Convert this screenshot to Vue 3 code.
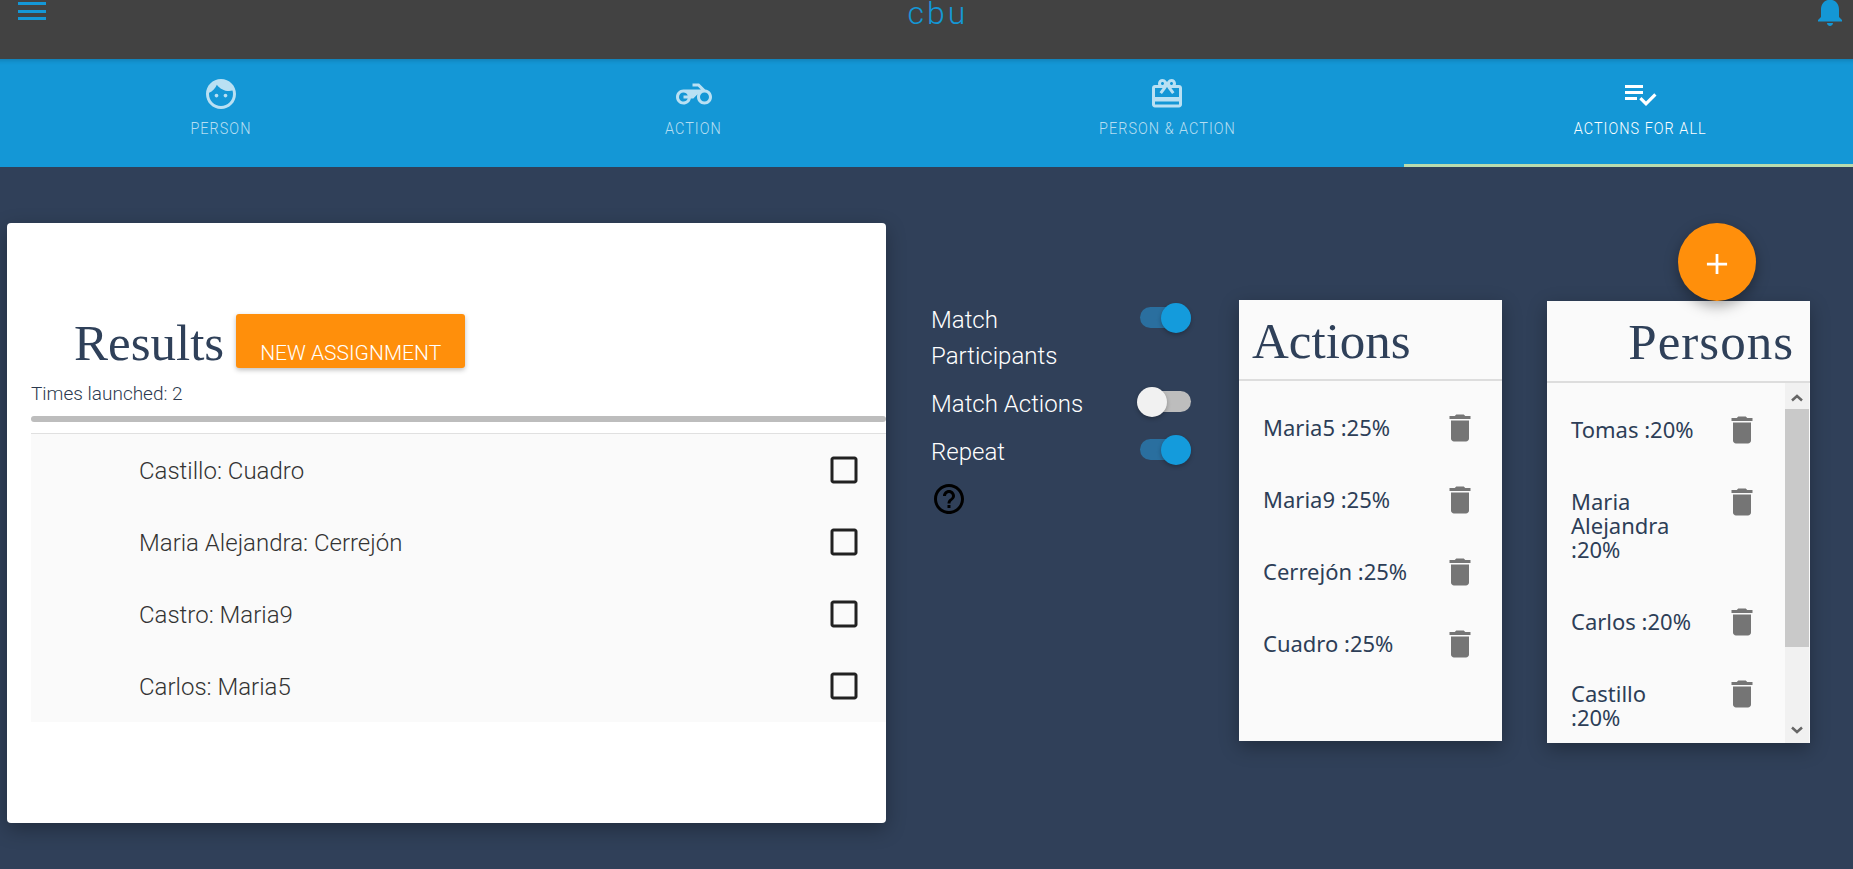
<script setup>
const tabs = [
  { label: 'PERSON', icon: 'M9 11.75c-.69 0-1.25.56-1.25 1.25s.56 1.25 1.25 1.25 1.25-.56 1.25-1.25-.56-1.25-1.25-1.25zm6 0c-.69 0-1.25.56-1.25 1.25s.56 1.25 1.25 1.25 1.25-.56 1.25-1.25-.56-1.25-1.25-1.25zM12 2C6.48 2 2 6.48 2 12s4.48 10 10 10 10-4.48 10-10S17.52 2 12 2zm0 18c-4.41 0-8-3.59-8-8 0-.29.02-.58.05-.86 2.36-1.05 4.23-2.98 5.21-5.37C11.07 8.33 14.05 10 17.42 10c.78 0 1.53-.09 2.25-.26.21.71.33 1.47.33 2.26 0 4.41-3.59 8-8 8z' },
  { label: 'ACTION', icon: 'M19.44 9.03L15.41 5H11v2h3.59l2 2H5c-2.8 0-5 2.2-5 5s2.2 5 5 5c2.46 0 4.45-1.69 4.9-4h1.65l2.77-2.77c-.21.54-.32 1.14-.32 1.77 0 2.8 2.2 5 5 5s5-2.2 5-5c0-2.65-1.97-4.77-4.56-4.97zM7.82 15C7.4 16.15 6.3 17 5 17c-1.63 0-3-1.37-3-3s1.37-3 3-3c1.3 0 2.4.85 2.82 2H5v2h2.82zM19 17c-1.66 0-3-1.34-3-3s1.34-3 3-3 3 1.34 3 3-1.34 3-3 3z' },
  { label: 'PERSON & ACTION', icon: 'M20 6h-2.18c.11-.31.18-.65.18-1 0-1.66-1.34-3-3-3-1.05 0-1.96.54-2.5 1.35l-.5.67-.5-.68C10.96 2.54 10.05 2 9 2 7.34 2 6 3.34 6 5c0 .35.07.69.18 1H4c-1.11 0-1.99.89-1.99 2L2 19c0 1.11.89 2 2 2h16c1.11 0 2-.89 2-2V8c0-1.11-.89-2-2-2zm-5-2c.55 0 1 .45 1 1s-.45 1-1 1-1-.45-1-1 .45-1 1-1zM9 4c.55 0 1 .45 1 1s-.45 1-1 1-1-.45-1-1 .45-1 1-1zm11 15H4v-2h16v2zm0-5H4V8h5.08L7 10.83 8.62 12 11 8.76l1-1.36 1 1.36L15.38 12 17 10.83 14.92 8H20v6z' },
  { label: 'ACTIONS FOR ALL', icon: 'M14 10H2v2h12v-2zm0-4H2v2h12V6zM2 16h8v-2H2v2zm19.5-4.5L23 13l-6.99 7-4.51-4.5L13 14l3.01 3 5.49-5.5z', active: true }
]

const results = ['Castillo: Cuadro', 'Maria Alejandra: Cerrejón', 'Castro: Maria9', 'Carlos: Maria5']
const toggles = [
  { label: 'Match Participants', on: true },
  { label: 'Match Actions', on: false },
  { label: 'Repeat', on: true }
]
const actions = ['Maria5 :25%', 'Maria9 :25%', 'Cerrejón :25%', 'Cuadro :25%']
const persons = ['Tomas :20%', 'Maria Alejandra :20%', 'Carlos :20%', 'Castillo :20%']

const trash = 'M6 19c0 1.1.9 2 2 2h8c1.1 0 2-.9 2-2V7H6v12zM19 4h-3.5l-1-1h-5l-1 1H5v2h14V4z'
</script>

<template>
  <div class="page">
    <header class="topbar">
      <div class="burger"><span></span><span></span><span></span></div>
      <div class="brand">cbu</div>
      <svg class="bell" viewBox="0 0 24 24"><path d="M12 22c1.1 0 2-.9 2-2h-4c0 1.1.9 2 2 2zm6-6v-5c0-3.07-1.63-5.64-4.5-6.32V4c0-.83-.67-1.5-1.5-1.5s-1.5.67-1.5 1.5v.68C7.64 5.36 6 7.92 6 11v5l-2 2v1h16v-1l-2-2z" /></svg>
    </header>

    <nav class="tabs">
      <div v-for="tab in tabs" :key="tab.label" :class="['tab', { active: tab.active }]">
        <svg class="tab-icon" viewBox="0 0 24 24"><path :d="tab.icon" /></svg>
        <span class="tab-label">{{ tab.label }}</span>
      </div>
    </nav>

    <main class="content">
      <section class="results">
        <div class="results-head">
          <h2 class="results-title">Results</h2>
          <button class="new-btn">NEW ASSIGNMENT</button>
        </div>
        <div class="launched">Times launched: 2</div>
        <div class="progress"></div>
        <ul class="result-list">
          <li v-for="row in results" :key="row" class="result-row">
            <span>{{ row }}</span>
            <svg class="check" viewBox="0 0 24 24"><path d="M19 5v14H5V5h14m0-2H5c-1.1 0-2 .9-2 2v14c0 1.1.9 2 2 2h14c1.1 0 2-.9 2-2V5c0-1.1-.9-2-2-2z" /></svg>
          </li>
        </ul>
      </section>

      <section class="settings">
        <div v-for="t in toggles" :key="t.label" class="setting">
          <span class="setting-label">{{ t.label }}</span>
          <span :class="['toggle', { on: t.on }]"><i class="track"></i><i class="thumb"></i></span>
        </div>
        <svg class="help" viewBox="0 0 24 24"><path d="M11 18h2v-2h-2v2zm1-16C6.48 2 2 6.48 2 12s4.48 10 10 10 10-4.48 10-10S17.52 2 12 2zm0 18c-4.41 0-8-3.59-8-8s3.59-8 8-8 8 3.59 8 8-3.59 8-8 8zm0-14c-2.21 0-4 1.79-4 4h2c0-1.1.9-2 2-2s2 .9 2 2c0 2-3 1.75-3 5h2c0-2.25 3-2.5 3-5 0-2.21-1.79-4-4-4z" /></svg>
      </section>

      <section class="panel actions">
        <h2 class="panel-title">Actions</h2>
        <ul class="panel-list">
          <li v-for="a in actions" :key="a" class="panel-row">
            <span class="panel-text">{{ a }}</span>
            <svg class="trash" viewBox="0 0 24 24"><path :d="trash" /></svg>
          </li>
        </ul>
      </section>

      <section class="panel persons">
        <button class="fab"><svg viewBox="0 0 24 24"><path d="M10.500 1h3v9.500H23v3h-9.500V23h-3v-9.500H1v-3h9.500z" /></svg></button>
        <h2 class="panel-title">Persons</h2>
        <div class="panel-body">
          <ul class="panel-list">
            <li v-for="p in persons" :key="p" class="panel-row">
              <span class="panel-text">{{ p }}</span>
              <svg class="trash" viewBox="0 0 24 24"><path :d="trash" /></svg>
            </li>
          </ul>
          <div class="scrollbar">
            <svg class="arrow" viewBox="0 0 12 8"><path d="M1 6.500 6 2l5 4.500" /></svg>
            <div class="scroll-thumb"></div>
            <svg class="arrow down" viewBox="0 0 12 8"><path d="M1 1.500 6 6l5-4.500" /></svg>
          </div>
        </div>
      </section>
    </main>
  </div>
</template>

<style scoped>
.page {
  width: 1853px;
  height: 869px;
  overflow: hidden;
  background: #304059;
  font-family: Roboto, "Liberation Sans", sans-serif;
}

.topbar {
  height: 59px;
  background: #424242;
  display: flex;
  justify-content: space-between;
  align-items: flex-start;
}

.burger {
  margin: 2px 0 0 18px;
  width: 28px;
  height: 18px;
  display: flex;
  flex-direction: column;
  justify-content: space-between;
}

.burger span {
  height: 3px;
  background: #1497d6;
}

.brand {
  margin: 0 0 0 18px;
  font-weight: 300;
  font-size: 32px;
  line-height: 26px;
  letter-spacing: 3px;
  color: #1497d6;
}

.bell {
  width: 36px;
  height: 36px;
  margin: -7px 5px 0 0;
  fill: #1497d6;
}

.tabs {
  width: 1893px;
  height: 108px;
  margin-left: -16px;
  display: flex;
  background: #1497d6;
  box-shadow: inset 0 5px 5px -4px rgba(0, 0, 0, 0.2);
}

.tab {
  flex: 1;
  display: flex;
  flex-direction: column;
  align-items: center;
  padding-top: 17px;
  color: rgba(255, 255, 255, 0.7);
  fill: rgba(255, 255, 255, 0.7);
}

.tab.active {
  color: #fff;
  fill: #fff;
  border-bottom: 3px solid #b9dbae;
}

.tab-icon {
  width: 36px;
  height: 36px;
}

.tab-label {
  margin-top: 6px;
  font-weight: 300;
  font-size: 17px;
  line-height: 20px;
  letter-spacing: 1.2px;
  transform: scaleX(0.85);
}

.content {
  display: flex;
  align-items: flex-start;
  padding: 56px 0 0 7px;
}

.results {
  width: 879px;
  height: 600px;
  background: #fff;
  border-radius: 4px;
  box-shadow: 0 6px 20px rgba(0, 0, 0, 0.3);
  padding: 91px 0 0 24px;
  box-sizing: border-box;
}

.results-head {
  display: flex;
  align-items: flex-start;
  padding-left: 43px;
  height: 54px;
}

.results-title {
  margin: 0;
  font-family: "Liberation Serif", serif;
  font-weight: 400;
  font-size: 51px;
  line-height: 58px;
  color: #2f4059;
}

.new-btn {
  margin-left: 12px;
  width: 229px;
  height: 54px;
  border: 0;
  border-radius: 3px;
  background: #ff8f0b;
  color: #fff;
  font-family: Roboto, sans-serif;
  font-weight: 300;
  font-size: 21px;
  padding: 24px 0 0;
  line-height: 28px;
  box-shadow: 0 2px 5px rgba(0, 0, 0, 0.26);
}

.launched {
  margin-top: 14px;
  font-weight: 300;
  font-size: 19px;
  line-height: 24px;
  color: #2c3a4f;
}

.progress {
  margin-top: 10px;
  height: 6px;
  border-radius: 3px;
  background: #bdbdbd;
}

.result-list {
  list-style: none;
  margin: 11px 0 0;
  padding: 0;
  background: #fafafa;
  border-top: 1px solid #e0e0e0;
}

.result-row {
  height: 72px;
  padding: 0 24px 0 108px;
  display: flex;
  align-items: center;
  justify-content: space-between;
  font-weight: 300;
  font-size: 24px;
  color: #333;
}

.result-row span {
  padding-top: 2px;
}

.check {
  width: 36px;
  height: 36px;
  fill: rgba(0, 0, 0, 0.87);
}

.settings {
  width: 260px;
  margin: 80px 48px 0 45px;
  color: #fff;
}

.setting {
  display: flex;
  justify-content: space-between;
  align-items: flex-start;
  margin-bottom: 12px;
}

.setting-label {
  max-width: 190px;
  margin-top: -1px;
  padding-bottom: 1px;
  font-weight: 300;
  font-size: 24px;
  line-height: 36px;
}

.toggle {
  position: relative;
  width: 54px;
  height: 30px;
}

.track {
  position: absolute;
  left: 3px;
  right: 0;
  top: 4px;
  height: 21px;
  border-radius: 11px;
  background: #bdbdbd;
}

.thumb {
  position: absolute;
  left: 0;
  top: 0;
  width: 30px;
  height: 30px;
  border-radius: 50%;
  background: #f1f1f1;
  box-shadow: 0 2px 4px rgba(0, 0, 0, 0.25);
}

.toggle.on .track {
  background: #2a6f9f;
}

.toggle.on .thumb {
  left: 24px;
  background: #149bdc;
}

.help {
  display: block;
  width: 36px;
  height: 36px;
  margin: -2px 0 0 0;
  fill: #000;
}

.panel {
  width: 263px;
  background: #fafafa;
  box-shadow: 0 6px 18px rgba(0, 0, 0, 0.3);
  position: relative;
}

.actions {
  height: 441px;
  margin: 77px 45px 0 0;
}

.persons {
  height: 442px;
  margin-top: 78px;
}

.panel-title {
  margin: 0;
  height: 79px;
  padding-left: 13px;
  border-bottom: 2px solid #ddd;
  font-family: "Liberation Serif", serif;
  font-weight: 400;
  font-size: 51px;
  line-height: 82px;
  color: #2f4059;
}

.persons .panel-title {
  height: 80px;
  padding: 0 16px 0 0;
  text-align: right;
  letter-spacing: 1px;
  line-height: 82px;
}

.panel-list {
  list-style: none;
  margin: 0;
  padding: 11px 0 0;
  flex: 1;
}

.panel-row {
  display: flex;
  justify-content: space-between;
  align-items: flex-start;
  padding: 18px 24px 18px 24px;
}

.panel-text {
  padding: 5px 0 7px;
  font-family: "Noto Sans", "Open Sans", sans-serif;
  font-size: 22px;
  line-height: 24px;
  color: #2d3e57;
}

.persons .panel-row {
  padding-right: 25px;
}

.persons .panel-text {
  width: 127px;
}

.trash {
  flex: none;
  width: 36px;
  height: 36px;
  fill: #757575;
}

.panel-body {
  display: flex;
  height: 360px;
  overflow: hidden;
}

.scrollbar {
  flex: none;
  width: 24px;
  margin-right: 1px;
  background: #f1f1f1;
  display: flex;
  flex-direction: column;
}

.arrow {
  flex: none;
  width: 12px;
  height: 8px;
  margin: 11px auto 7px;
  fill: none;
  stroke: #666;
  stroke-width: 2.5;
}

.arrow.down {
  margin: auto auto 9px;
}

.scroll-thumb {
  height: 238px;
  background: #c9c9c9;
}

.fab {
  position: absolute;
  top: -78px;
  left: 131px;
  width: 78px;
  height: 78px;
  border: 0;
  padding: 0;
  border-radius: 50%;
  background: #ff8f0b;
  box-shadow: 0 5px 14px rgba(0, 0, 0, 0.35);
  display: flex;
  align-items: center;
  justify-content: center;
}

.fab svg {
  width: 22px;
  height: 22px;
  margin-top: 4px;
  fill: #fff;
}
</style>
